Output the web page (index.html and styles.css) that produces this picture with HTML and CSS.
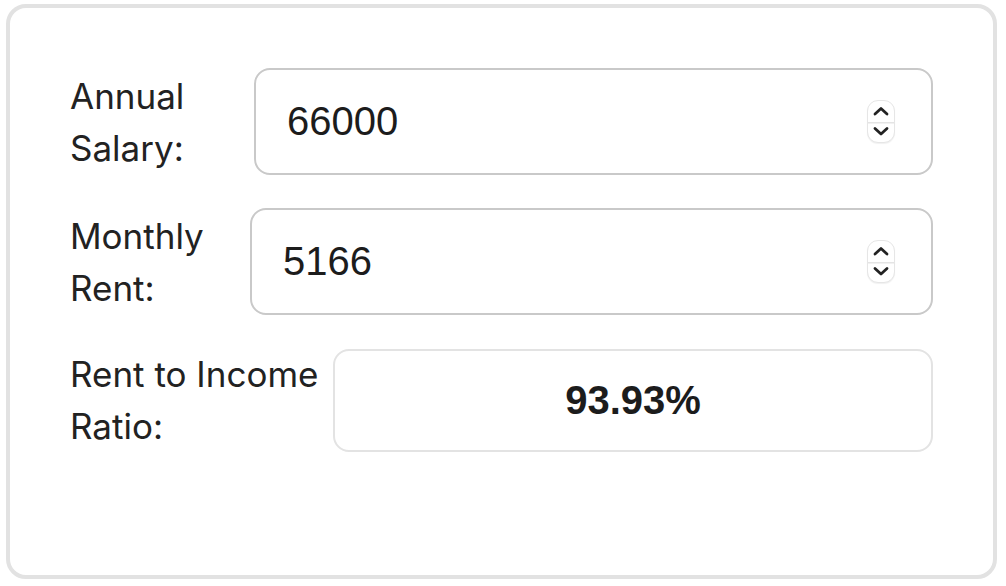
FILE: index.html
```html
<!DOCTYPE html>
<html lang="en">
<head>
    <meta charset="UTF-8">
    <meta name="viewport" content="width=device-width, initial-scale=1.0">
    <title>Rent to Income Calculator</title>
    <link rel="stylesheet" href="styles.css">
</head>
<body>
    <div class="card">
        <div class="row">
            <label class="field-label label-salary" for="salary">Annual Salary:</label>
            <div class="input-wrap">
                <input type="number" id="salary" value="66000">
                <span class="spinner">
                    <svg width="28" height="43" viewBox="0 0 28 43">
                        <path d="M8 14 L14 8.5 L20 14" fill="none" stroke="#222" stroke-width="2.8" stroke-linecap="round" stroke-linejoin="round"/>
                        <path d="M8 28.5 L14 34 L20 28.5" fill="none" stroke="#222" stroke-width="2.8" stroke-linecap="round" stroke-linejoin="round"/>
                    </svg>
                </span>
            </div>
        </div>
        <div class="row">
            <label class="field-label label-rent" for="rent">Monthly Rent:</label>
            <div class="input-wrap">
                <input type="number" id="rent" value="5166">
                <span class="spinner">
                    <svg width="28" height="43" viewBox="0 0 28 43">
                        <path d="M8 14 L14 8.5 L20 14" fill="none" stroke="#222" stroke-width="2.8" stroke-linecap="round" stroke-linejoin="round"/>
                        <path d="M8 28.5 L14 34 L20 28.5" fill="none" stroke="#222" stroke-width="2.8" stroke-linecap="round" stroke-linejoin="round"/>
                    </svg>
                </span>
            </div>
        </div>
        <div class="row">
            <div class="field-label label-ratio">Rent to Income Ratio:</div>
            <div class="result" id="ratio">93.93%</div>
        </div>
    </div>
</body>
</html>
```

FILE: styles.css
```css
body {
    margin: 0;
    padding: 4px 0 0 6px;
    background: #fff;
    font-family: Inter, "Noto Sans", sans-serif;
    color: #222;
}
.card {
    box-sizing: border-box;
    width: 991px;
    height: 575px;
    border: 4px solid #e2e2e2;
    border-radius: 20px;
    padding: 60px;
    display: flex;
    flex-direction: column;
    gap: 33px;
}
.row {
    display: flex;
    align-items: center;
}
.field-label {
    flex: none;
    font-size: 35px;
    line-height: 52px;
    color: #222;
}
.label-salary {
    width: 184px;
}
.label-rent {
    width: 180px;
}
.label-ratio {
    width: 263px;
}
.input-wrap {
    flex: 1;
    position: relative;
}
.input-wrap input {
    box-sizing: border-box;
    width: 100%;
    height: 107px;
    border: 2px solid #c9c9c9;
    border-radius: 16px;
    padding: 0 31px;
    font-family: "Liberation Sans", Arial, sans-serif;
    font-size: 40px;
    color: #1c1c1c;
    background: #fff;
    outline: none;
    -moz-appearance: textfield;
}
.input-wrap input::-webkit-outer-spin-button,
.input-wrap input::-webkit-inner-spin-button {
    -webkit-appearance: none;
    margin: 0;
}
.spinner {
    position: absolute;
    right: 38px;
    top: 32px;
    width: 28px;
    height: 43px;
    box-sizing: border-box;
    border: 1px solid #e6e6e6;
    border-radius: 11px;
    background: linear-gradient(#e4e4e4, #e4e4e4) center 20.5px / 100% 1.5px no-repeat, #fff;
    box-shadow: 0 1px 1px rgba(0, 0, 0, 0.06);
}
.spinner svg {
    display: block;
    margin: -1px;
}
.result {
    flex: 1;
    box-sizing: border-box;
    height: 103px;
    border: 2px solid #e3e3e3;
    border-radius: 16px;
    display: flex;
    align-items: center;
    justify-content: center;
    font-family: "Liberation Sans", Arial, sans-serif;
    font-size: 40px;
    font-weight: bold;
    color: #1c1c1c;
}
```
